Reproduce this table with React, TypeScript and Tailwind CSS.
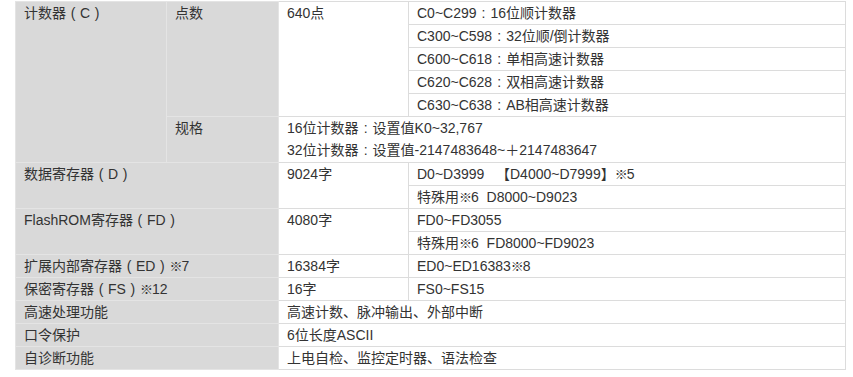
import { Fragment } from 'react';

const font = { fontFamily: '"Liberation Sans", "Noto Sans CJK SC", Arial, sans-serif' };

const gray = 'bg-[#d9d9d9] border border-[#e4e4e4] px-2 align-top';
const white = 'bg-white border border-[#dcdcdc] px-2 align-top';

// full-width punctuation drawn centred in its box, as on the source page
function Txt({ children }: { children: string }) {
  const parts = children.split(/([（）：※])/);
  return (
    <>
      {parts.map((p, i) => {
        if (p === '（') return <span key={i} className="inline-block w-[14px] text-center">(</span>;
        if (p === '）') return <span key={i} className="inline-block w-[14px] text-center">)</span>;
        if (p === '：') return <span key={i} className="inline-block w-[14px] text-center">:</span>;
        if (p === '※') return <span key={i} className="text-[13px] leading-none tracking-[-1px]">※</span>;
        return <Fragment key={i}>{p}</Fragment>;
      })}
    </>
  );
}

export default function App() {
  return (
    <div className="w-[853px] h-[377px] bg-white pl-[15px] pt-px" style={font}>
      <table className="border-collapse w-[830px] table-fixed text-[14px] leading-[22px] text-[#333]">
        <colgroup>
          <col className="w-[151px]" />
          <col className="w-[112px]" />
          <col className="w-[130px]" />
          <col className="w-[437px]" />
        </colgroup>
        <tbody>
          <tr>
            <td rowSpan={6} className={gray}><Txt>计数器（C）</Txt></td>
            <td rowSpan={5} className={gray}>点数</td>
            <td rowSpan={5} className={white}>640点</td>
            <td className={white}><Txt>C0~C299：16位顺计数器</Txt></td>
          </tr>
          <tr>
            <td className={white}><Txt>C300~C598：32位顺/倒计数器</Txt></td>
          </tr>
          <tr>
            <td className={white}><Txt>C600~C618：单相高速计数器</Txt></td>
          </tr>
          <tr>
            <td className={white}><Txt>C620~C628：双相高速计数器</Txt></td>
          </tr>
          <tr>
            <td className={white}><Txt>C630~C638：AB相高速计数器</Txt></td>
          </tr>
          <tr>
            <td className={gray}>规格</td>
            <td colSpan={2} className={`${white} pb-px`}>
              <div><Txt>16位计数器：设置值K0~32,767</Txt></div>
              <div><Txt>32位计数器：设置值-2147483648~＋2147483647</Txt></div>
            </td>
          </tr>
          <tr>
            <td rowSpan={2} colSpan={2} className={gray}><Txt>数据寄存器（D）</Txt></td>
            <td rowSpan={2} className={white}>9024字</td>
            <td className={white}><Txt>{'D0~D3999\u00a0\u00a0\u00a0【D4000~D7999】※5'}</Txt></td>
          </tr>
          <tr>
            <td className={white}><Txt>{'特殊用※6\u00a0\u00a0D8000~D9023'}</Txt></td>
          </tr>
          <tr>
            <td rowSpan={2} colSpan={2} className={gray}><Txt>FlashROM寄存器（FD）</Txt></td>
            <td rowSpan={2} className={white}>4080字</td>
            <td className={white}>FD0~FD3055</td>
          </tr>
          <tr>
            <td className={white}><Txt>{'特殊用※6\u00a0\u00a0FD8000~FD9023'}</Txt></td>
          </tr>
          <tr>
            <td colSpan={2} className={gray}><Txt>扩展内部寄存器（ED）※7</Txt></td>
            <td className={white}>16384字</td>
            <td className={white}><Txt>ED0~ED16383※8</Txt></td>
          </tr>
          <tr>
            <td colSpan={2} className={gray}><Txt>保密寄存器（FS）※12</Txt></td>
            <td className={white}>16字</td>
            <td className={white}>FS0~FS15</td>
          </tr>
          <tr>
            <td colSpan={2} className={gray}>高速处理功能</td>
            <td colSpan={2} className={white}>高速计数、脉冲输出、外部中断</td>
          </tr>
          <tr>
            <td colSpan={2} className={gray}>口令保护</td>
            <td colSpan={2} className={white}>6位长度ASCII</td>
          </tr>
          <tr>
            <td colSpan={2} className={gray}>自诊断功能</td>
            <td colSpan={2} className={white}>上电自检、监控定时器、语法检查</td>
          </tr>
        </tbody>
      </table>
    </div>
  );
}
